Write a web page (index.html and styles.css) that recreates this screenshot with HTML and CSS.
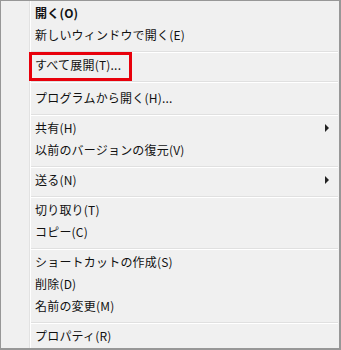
FILE: index.html
```html
<!DOCTYPE html>
<html lang="ja">
<head>
  <meta charset="UTF-8" />
  <title>Context Menu</title>
  <link rel="stylesheet" href="styles.css">
</head>
<body>
  <div class="menu">
    <div class="gutter"></div>
    <div class="items">
      <div class="item bold">開く(O)</div>
      <div class="item">新しいウィンドウで開く(E)</div>
      <div class="sep"></div>
      <div class="item marked">すべて展開(T)...</div>
      <div class="sep tall"></div>
      <div class="item">プログラムから開く(H)...</div>
      <div class="sep"></div>
      <div class="item">共有(H)<span class="arrow"></span></div>
      <div class="item">以前のバージョンの復元(V)</div>
      <div class="sep"></div>
      <div class="item">送る(N)<span class="arrow"></span></div>
      <div class="sep"></div>
      <div class="item">切り取り(T)</div>
      <div class="item">コピー(C)</div>
      <div class="sep"></div>
      <div class="item">ショートカットの作成(S)</div>
      <div class="item">削除(D)</div>
      <div class="item">名前の変更(M)</div>
      <div class="sep"></div>
      <div class="item">プロパティ(R)</div>
    </div>
  </div>
</body>
</html>
```

FILE: styles.css
```css
html, body {
  margin: 0;
  padding: 0;
  background: #ffffff;
}

body {
  font-family: "Noto Sans CJK JP", "Noto Sans", sans-serif;
  font-size: 12px;
  letter-spacing: 0.2px;
  color: #111111;
}

.menu {
  display: flex;
  width: 341px;
  height: 350px;
  box-sizing: border-box;
  background: #f0f0f0;
  border: 1px solid #979797;
  border-right-width: 2px;
  border-bottom-width: 2px;
}

.gutter {
  width: 28px;
  border-right: 1px solid #e2e2e2;
}

.items {
  flex: 1;
  border-left: 1px solid #ffffff;
  padding-top: 2px;
}

.item {
  position: relative;
  display: flex;
  align-items: center;
  justify-content: space-between;
  height: 22px;
  box-sizing: border-box;
  padding: 0 10px 3px 4px;
  white-space: nowrap;
}

.bold {
  font-weight: bold;
}

/* red frame drawn over the item */
.marked::after {
  content: "";
  position: absolute;
  left: -2px;
  top: -3px;
  width: 97px;
  height: 23px;
  border: 3px solid #e8000b;
}

.arrow {
  width: 0;
  height: 0;
  margin-top: 1px;
  border-left: 4px solid #222;
  border-top: 4px solid transparent;
  border-bottom: 4px solid transparent;
}

.sep {
  height: 8px;
  margin-right: 1px;
  box-sizing: border-box;
  padding-top: 4px;
}

.sep::before {
  content: "";
  display: block;
  height: 1px;
  background: #e0e0e0;
  border-bottom: 1px solid #ffffff;
}

.sep.tall {
  height: 11px;
}
```
